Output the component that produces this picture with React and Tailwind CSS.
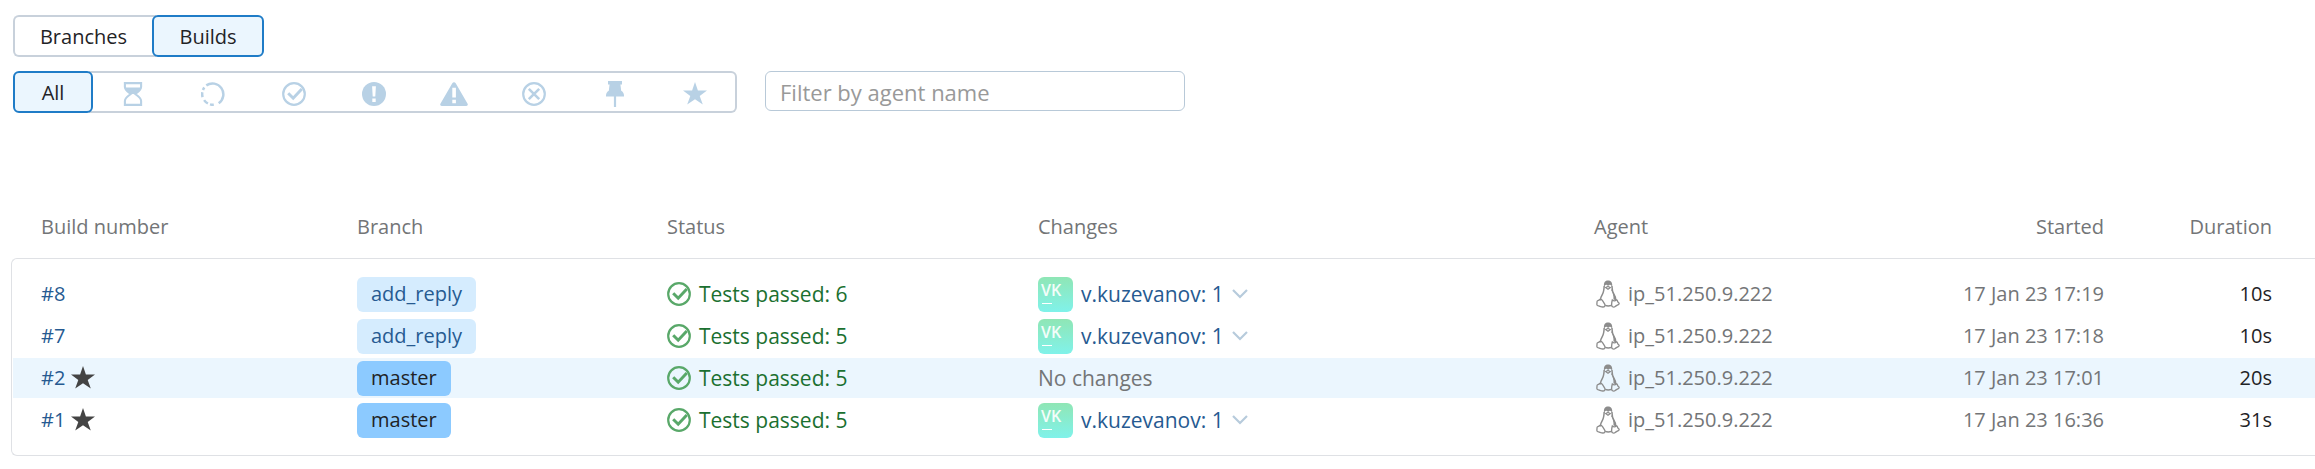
import React from "react";

const builds = [
  { number: 8, branch: "add_reply", passed: 6, changes: 1, started: "17 Jan 23 17:19", duration: "10s" },
  { number: 7, branch: "add_reply", passed: 5, changes: 1, started: "17 Jan 23 17:18", duration: "10s" },
  { number: 2, branch: "master", passed: 5, changes: 0, started: "17 Jan 23 17:01", duration: "20s", starred: true, active: true },
  { number: 1, branch: "master", passed: 5, changes: 1, started: "17 Jan 23 16:36", duration: "31s", starred: true },
];

const agent = "ip_51.250.9.222";
const starPoints = "12,0 14.9,8.6 24,8.6 16.7,13.9 19.8,22.6 12,17.3 4.2,22.6 7.3,13.9 0,8.6 9.1,8.6";

function Icon({ className = "", children }) {
  return (
    <svg viewBox="0 0 24 24" className={`size-6 shrink-0 ${className}`} fill="none" aria-hidden="true">
      {children}
    </svg>
  );
}

function CheckCircle({ className }) {
  return (
    <Icon className={className}>
      <circle cx="12" cy="12" r="10.8" stroke="currentColor" strokeWidth="2.2" />
      <path d="M6.2 11.2l5 5L19.8 7" stroke="currentColor" strokeWidth="3" />
    </Icon>
  );
}

function Star({ className }) {
  return (
    <Icon className={className}>
      <polygon points={starPoints} fill="currentColor" />
    </Icon>
  );
}

function Hourglass() {
  return (
    <Icon>
      <path
        d="M3.9 1.1h16.2V5c0 3.2-3.6 5.2-5.8 7 2.2 1.8 5.8 3.8 5.8 7v3.9H3.9V19c0-3.2 3.6-5.2 5.8-7-2.2-1.8-5.8-3.8-5.8-7V1.1z"
        stroke="currentColor"
        strokeWidth="2.1"
      />
      <path d="M4 5.5h16c-.6 3.2-4 4.8-6.2 6.5h-3.6C8 10.3 4.6 8.7 4 5.5z" fill="currentColor" />
    </Icon>
  );
}

function Running() {
  return (
    <Icon>
      <g stroke="currentColor" strokeWidth="2.5">
        <path d="M5.3 3.4A10.8 10.8 0 1 1 17.7 21.2" />
        <path d="M3.3 5.6A10.8 10.8 0 0 0 2 8" />
        <path d="M1.3 10.3A10.8 10.8 0 0 0 1.6 15.2" />
        <path d="M3.1 18.1A10.8 10.8 0 0 0 6.9 21.5" />
        <path d="M9 22.4A10.8 10.8 0 0 0 12.8 22.8" />
      </g>
    </Icon>
  );
}

function Failed() {
  return (
    <Icon>
      <circle cx="12" cy="12" r="12" fill="currentColor" />
      <path d="M10.1 4.2h3.8l-.6 10.2h-2.6zM10.3 16.6h3.4v3.4h-3.4z" fill="#fff" />
    </Icon>
  );
}

function Warning() {
  return (
    <svg viewBox="0 0 28 24" className="h-6 w-7 shrink-0" aria-hidden="true">
      <path d="M14 .3c.7 0 1.3.3 1.7 1L27.6 21.8c.6 1-.1 2.2-1.3 2.2H1.7C.5 24-.2 22.8.4 21.8L12.3 1.3c.4-.7 1-1 1.7-1z" fill="currentColor" />
      <path d="M12.3 5.8h3.6v9.8h-3.6zM12.3 17.8h3.6v3.4h-3.6z" fill="#fff" />
    </svg>
  );
}

function Canceled() {
  return (
    <Icon>
      <circle cx="12" cy="12" r="10.8" stroke="currentColor" strokeWidth="2.2" />
      <path d="M6.8 6.8l10.4 10.4M17.2 6.8L6.8 17.2" stroke="currentColor" strokeWidth="2.6" />
    </Icon>
  );
}

function Pin() {
  return (
    <svg viewBox="0 0 18 26" className="h-[26px] w-[18px] shrink-0" aria-hidden="true">
      <path d="M2 0h14v3.4h-1.6l.8 6.4c1.7 1 2.8 2.6 2.8 4.8v1H10.1V26H7.9V15.6H0v-1c0-2.2 1.1-3.8 2.8-4.8l.8-6.4H2z" fill="currentColor" />
    </svg>
  );
}

function Penguin() {
  return (
    <svg viewBox="0 0 24 28" className="h-7 w-6 shrink-0 text-[#8c8c8c]" fill="none" aria-hidden="true">
      <path d="M8 7.5C7.5 3 8.6.5 12 .5s4.6 2.6 4.2 6.5c-1-1.9-2-2.7-2.8-1.9-.7.7-1.7.7-2.5 0C9.8 4.3 8.6 5.2 8 7.5z" fill="currentColor" />
      <path d="M8.2 6c-.3 4.6-.4 6-1.7 8.2C5.1 16.6 4.3 18.6 4.2 20.5M15.9 6c.2 4.6.6 6 2 8.2 1.2 2 1.9 3.6 1.9 5.8" stroke="currentColor" strokeWidth="1.5" />
      <path d="M16 8.5c.6 3.3 1.2 4.3 2.5 6.4 1 1.8 1.5 3.4 1.3 5.3l-2.3-.7c.2-4-.9-7.2-2.3-9.3z" fill="currentColor" />
      <path d="M9.6 7.5L12 6.4l2.4 1.1L12 9.3z" stroke="currentColor" strokeWidth="1.1" />
      <path d="M4 19.3c1.2-.3 1.9.3 2.7 1.5l2 3.3c.8 1.5 0 2.9-1.8 2.9-1.7 0-3.4-1-5.1-1.3-1.5-.4-.9-1.6-.8-2.8 0-1.3-.3-2 .8-2.3C3 20.4 3 19.7 4 19.3z" stroke="currentColor" strokeWidth="1.3" />
      <path d="M16.3 20c1 .9 3.1.9 4.4-.2.9.3.6 1.6 1.2 2.2.7.7 1.5.9 1.2 1.7-.4 1.2-2.6 1.4-3.9 2.8-1.3 1.1-3.3.6-3.5-1.1-.2-1.7.2-4 .6-5.4z" stroke="currentColor" strokeWidth="1.3" />
      <path d="M9.2 25.4c2 .7 4 .7 6.3 0" stroke="currentColor" strokeWidth="1.5" />
    </svg>
  );
}

function Chevron() {
  return (
    <svg viewBox="0 0 16 10" className="h-2.5 w-4 shrink-0 text-[#b7cbdc]" fill="none" aria-hidden="true">
      <path d="M1 1l7 7 7-7" stroke="currentColor" strokeWidth="2.2" />
    </svg>
  );
}

function Avatar() {
  return (
    <span className="flex size-[35px] shrink-0 flex-col rounded-md bg-linear-to-b from-[#8fe6b5] to-[#80f2ea] px-[3px] pt-[5px] text-left text-[16px] leading-4 font-semibold text-white/90">
      VK
      <span className="mt-[5px] ml-px h-px w-2.5 bg-white" />
    </span>
  );
}

const filters = [
  ["Queued", <Hourglass />],
  ["Running", <Running />],
  ["Successful", <CheckCircle />],
  ["Failed", <Failed />],
  ["Problems", <Warning />],
  ["Canceled", <Canceled />],
  ["Pinned", <Pin />],
  ["Favorite", <Star />],
];

const selected = "border-2 border-[#1f7cc7] bg-[#ebf6fe] pt-0.5";
const columns =
  "grid grid-cols-[316fr_310fr_371fr_556fr_310fr_200fr_168fr] items-center pl-7 pr-[43px] text-left [&>*]:min-w-0 [&>*]:whitespace-nowrap";

function BuildRow({ build }) {
  const branchStyle = build.branch === "master" ? "bg-[#8ccaff] text-[#1f2326]" : "bg-[#d5ecfe] text-[#265a91]";
  return (
    <tr className={`${columns} h-10 ${build.active ? "bg-[#ebf6fe]" : ""}`}>
      <td className="flex items-center gap-1.5">
        <a href="#build" className="text-[#265a91]">#{build.number}</a>
        {build.starred && <Star className="text-[#444444]" />}
      </td>
      <td>
        <a href="#branch" className={`inline-flex h-[35px] items-center rounded-md px-3.5 align-middle ${branchStyle}`}>
          {build.branch}
        </a>
      </td>
      <td className="text-[21px]">
        <a href="#tests" className="flex items-center gap-2 text-[#1b7030]">
          <CheckCircle className="text-[#59a869]" />
          Tests passed: {build.passed}
        </a>
      </td>
      <td className="text-[21px] text-[#737577]">
        {build.changes > 0 ? (
          <button type="button" className="flex items-center gap-2 text-[#265a91]">
            <Avatar />
            v.kuzevanov: {build.changes}
            <Chevron />
          </button>
        ) : (
          "No changes"
        )}
      </td>
      <td className="flex items-center gap-2 pl-0.5 text-[#737577]">
        <Penguin />
        {agent}
      </td>
      <td className="text-right text-[#737577]">{build.started}</td>
      <td className="text-right text-[#1f2326]">{build.duration}</td>
    </tr>
  );
}

export default function App() {
  return (
    <main className="overflow-x-hidden bg-white pt-[15px] pb-3 font-['Open_Sans','Noto_Sans',sans-serif] text-[20px] leading-7 text-[#1f2326]">
      <div className="flex px-[13px]">
        <button type="button" className="-mr-1 h-[42px] w-[143px] rounded-l-md border-2 border-r-0 border-[#c8d1db] pt-0.5 pr-1">
          Branches
        </button>
        <button type="button" className={`h-[42px] w-28 rounded-md ${selected}`}>Builds</button>
      </div>

      <div className="mt-3.5 flex items-start gap-7 px-[13px]">
        <div className="flex h-[42px]">
          <button type="button" className={`z-10 -mr-1 w-20 rounded-md ${selected}`}>All</button>
          <div className="flex w-[648px] rounded-r-md pr-0.5 pl-1 text-[#b8d1e5] inset-ring-2 inset-ring-[#c8d1db]">
            {filters.map(([label, icon]) => (
              <button key={label} type="button" aria-label={label} className="flex flex-1 items-center justify-center pt-1">
                {icon}
              </button>
            ))}
          </div>
        </div>
        <input
          type="text"
          aria-label="Filter by agent name"
          placeholder="Filter by agent name"
          className="h-10 w-[420px] rounded-md border border-[#b8c9d8] px-3.5 pt-0.5 text-[22px] placeholder:text-[#999999]"
        />
      </div>

      <table className="mt-[100px] block pl-[11px]">
        <thead className="block pl-0.5">
          <tr className={`${columns} pb-[17px] text-[#737577]`}>
            <th className="font-normal">Build number</th>
            <th className="font-normal">Branch</th>
            <th className="font-normal">Status</th>
            <th className="font-normal">Changes</th>
            <th className="font-normal">Agent</th>
            <th className="text-right font-normal">Started</th>
            <th className="text-right font-normal">Duration</th>
          </tr>
        </thead>
        <tbody className="flex flex-col gap-0.5 rounded-l-md border border-r-0 border-[#dfe1e5] py-[15px] pl-px">
          {builds.map((build) => (
            <BuildRow key={build.number} build={build} />
          ))}
        </tbody>
      </table>
    </main>
  );
}
